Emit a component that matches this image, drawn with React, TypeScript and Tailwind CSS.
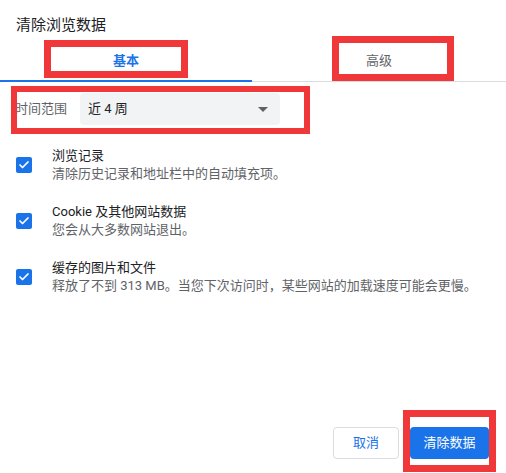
import { Check } from "lucide-react"

const font = { fontFamily: 'Roboto, "Noto Sans CJK SC", sans-serif' }

const items = [
  { title: "浏览记录", desc: "清除历史记录和地址栏中的自动填充项。" },
  { title: "Cookie 及其他网站数据", desc: "您会从大多数网站退出。" },
  { title: "缓存的图片和文件", desc: "释放了不到 313 MB。当您下次访问时，某些网站的加载速度可能会更慢。" },
]

export default function App() {
  return (
    <div className="relative w-[506px] h-[473px] bg-white overflow-hidden flex flex-col" style={font}>
      <div className="mt-[15px] pl-4 h-5 text-[15px] leading-5 text-[#202124]">清除浏览数据</div>

      {/* Tabs */}
      <div className="mt-[5px] flex h-[42px] border-b border-[#dadce0]">
        <div className="relative w-[252px] flex items-center justify-center text-[13px] font-bold text-[#1a73e8]">
          基本
          <div className="absolute left-0 right-0 -bottom-px h-[2px] bg-[#1a73e8]" />
        </div>
        <div className="flex-1 flex items-center justify-center text-[13px] text-[#5f6368]">高级</div>
      </div>

      {/* Time range */}
      <div className="mt-[11px] flex items-center pl-[15px]">
        <span className="w-[65px] text-[13px] text-[#5f6368]">时间范围</span>
        <div className="w-[200px] h-8 rounded bg-[#f1f3f4] flex items-center justify-between pl-2 pr-[8px]">
          <span className="text-[13px] text-[#202124]">近 4 周</span>
          <svg width="10" height="5" viewBox="0 0 10 5" className="mr-[4px]">
            <path d="M0 0 L10 0 L5 5 Z" fill="#5f6368" />
          </svg>
        </div>
      </div>

      {/* Checkbox list */}
      <div className="mt-[22px] flex flex-col gap-5">
        {items.map((it) => (
          <div key={it.title} className="flex items-center pl-4">
            <div className="w-4 h-4 rounded-[2px] bg-[#1a73e8] flex items-center justify-center">
              <Check className="w-3 h-3 text-white" strokeWidth={3.5} />
            </div>
            <div className="ml-5 flex flex-col">
              <span className="text-[13px] leading-[18px] text-[#202124]">{it.title}</span>
              <span className="text-[13px] leading-[18px] text-[#5f6368]">{it.desc}</span>
            </div>
          </div>
        ))}
      </div>

      {/* Buttons */}
      <div className="flex-1 flex items-end justify-end gap-[11px] pr-[17px] pb-[14px]">
        <button className="w-[66px] h-8 rounded border border-[#dadce0] bg-white text-[13px] text-[#1a73e8]">
          取消
        </button>
        <button className="w-[79px] h-8 rounded bg-[#1a73e8] text-[13px] text-white">清除数据</button>
      </div>

      {/* Annotation boxes */}
      <div className="absolute left-[44px] top-[40px] w-[144px] h-[38px] border-[7px] border-[#f0383b]" />
      <div className="absolute left-[332px] top-[36px] w-[122px] h-[45px] border-[7px] border-[#f0383b]" />
      <div className="absolute left-[11px] top-[86px] w-[299px] h-[48px] border-[6px] border-[#f0383b]" />
      <div className="absolute left-[403px] top-[410px] w-[93px] h-[62px] border-[7px] border-[#f0383b]" />
    </div>
  )
}
